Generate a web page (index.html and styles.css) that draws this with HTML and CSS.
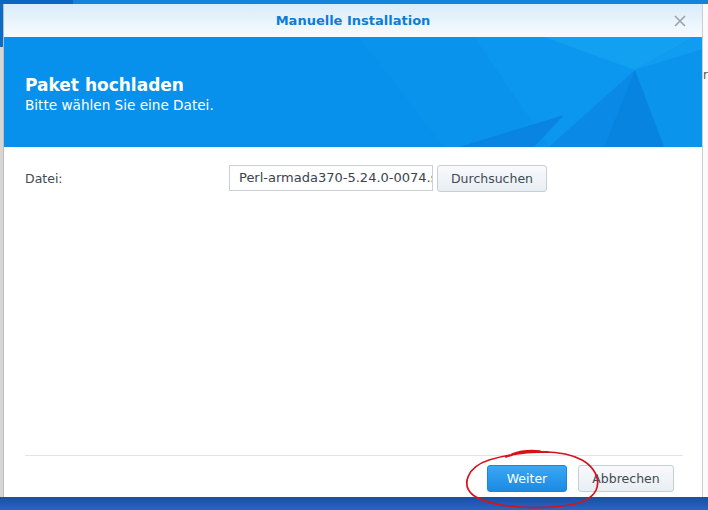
FILE: index.html
```html
<!DOCTYPE html>
<html lang="de">
    <head>
        <meta charset="UTF-8">
        <meta name="viewport" content="width=device-width,initial-scale=1.0">
        <title>Manuelle Installation</title>
        <link rel="stylesheet" href="styles.css">
    </head>
    <body>
        <div class="topbar"></div>
        <div class="desk">
            <div class="side-left"></div>
            <div class="dialog">
                <div class="dlg-head">
                    <span class="dlg-title">Manuelle Installation</span>
                    <span class="dlg-close">
                        <svg width="12" height="12" viewBox="0 0 12 12"><path d="M1 1 L11 11 M11 1 L1 11" stroke="#9aa3ab" stroke-width="1.6" fill="none"/></svg>
                    </span>
                </div>
                <div class="banner">
                    <svg class="banner-art" width="700" height="110" viewBox="0 0 700 110">
                        <polygon points="355,0 470,0 545,110 440,110" fill="#0a93ed"/>
                        <polygon points="470,0 600,0 631,33 545,110" fill="#0b97ef"/>
                        <polygon points="540,0 690,0 631,33" fill="#12a0f1"/>
                        <polygon points="545,110 631,33 600,110" fill="#0a8ae6"/>
                        <polygon points="455,110 560,78 530,110" fill="#0984e2"/>
                        <polygon points="631,33 700,12 700,110 660,110" fill="#0b94ec"/>
                        <polygon points="631,33 660,110 600,110" fill="#0783e0"/>
                        <polygon points="690,0 700,0 700,12 631,33" fill="#109cf0"/>
                    </svg>
                    <h1>Paket hochladen</h1>
                    <p>Bitte wählen Sie eine Datei.</p>
                </div>
                <div class="dlg-body">
                    <div class="field-row">
                        <label class="field-label">Datei:</label>
                        <div class="file-input">Perl-armada370-5.24.0-0074.spk</div>
                        <button class="btn">Durchsuchen</button>
                    </div>
                </div>
                <div class="dlg-foot">
                    <button class="btn primary">Weiter</button>
                    <button class="btn cancel">Abbrechen</button>
                </div>
            </div>
            <div class="side-right"><span>r</span></div>
        </div>
        <div class="taskbar"></div>
        <svg class="scribble" width="708" height="510" viewBox="0 0 708 510">
            <path d="M506 457 C524 450, 562 449, 582 460 C602 471, 606 497, 575 504 C545 510, 492 509, 473 495 C461 485, 467 467, 489 460 C505 455, 522 452, 548 452 M512 454 C520 451, 530 450, 540 451" stroke="#d8121c" stroke-width="1.7" fill="none" stroke-linecap="round"/>
        </svg>
    </body>
</html>
```

FILE: styles.css
```css
body {
    margin: 0;
    font-family: "DejaVu Sans", Verdana, sans-serif;
    font-size: 12.5px;
    color: #414b55;
    width: 708px;
    height: 510px;
    overflow: hidden;
    background: #f6f6f6;
}

.topbar {
    height: 4px;
    background: linear-gradient(to right, #0b68c0 73px, #1583d8 73px);
}

.desk {
    display: flex;
    height: 493px;
}

.side-left {
    width: 3px;
    background: linear-gradient(to bottom, #0c6cc4 43px, #d6d6d6 43px);
}

.side-right {
    width: 5px;
    background: #fbfbfb;
    border-top: 1px solid transparent;
    overflow: hidden;
}

.side-right span {
    display: block;
    margin-top: 63px;
    color: #555;
    font-size: 12px;
}

.dialog {
    width: 698px;
    border-left: 1px solid #b9bec3;
    border-right: 1px solid #c9ced2;
    background: white;
    display: flex;
    flex-direction: column;
}

.dlg-head {
    height: 33px;
    background: linear-gradient(to bottom, #d9ecfa, #f7fbfe);
    display: flex;
    align-items: center;
    justify-content: center;
    position: relative;
}

.dlg-title {
    font-weight: bold;
    font-size: 13px;
    color: #0b7dd6;
}

.dlg-close {
    position: absolute;
    right: 16px;
    top: 11px;
    line-height: 0;
}

.banner {
    height: 110px;
    background: #0891ec;
    position: relative;
    overflow: hidden;
    color: white;
    padding: 37px 0 0 21px;
    box-sizing: border-box;
}

.banner-art {
    position: absolute;
    left: 0;
    top: 0;
}

.banner h1 {
    position: relative;
    margin: 0;
    font-size: 17px;
    font-weight: bold;
    line-height: 22px;
}

.banner p {
    position: relative;
    margin: 0;
    font-size: 13.6px;
    line-height: 18px;
}

.dlg-body {
    flex: 1;
    padding: 18px 21px 0;
}

.field-row {
    display: flex;
    align-items: center;
    height: 26px;
}

.field-label {
    width: 204px;
    color: #414b55;
}

.file-input {
    width: 193px;
    height: 24px;
    line-height: 24px;
    padding: 0 0 0 9px;
    border: 1px solid #c9d0d6;
    white-space: nowrap;
    overflow: hidden;
    color: #3a444e;
    margin-right: 4px;
    font-size: 13px;
}

.btn {
    font-family: inherit;
    font-size: 12.5px;
    height: 27px;
    padding: 0;
    border: 1px solid #c6ced6;
    border-radius: 3px;
    background: linear-gradient(to bottom, #f8fafc, #e9eef3);
    color: #414b55;
    cursor: pointer;
}

.field-row .btn {
    width: 110px;
    height: 27px;
}

.dlg-foot {
    margin: 0 19px 0 21px;
    border-top: 1px solid #e2e4e6;
    height: 42px;
    display: flex;
    justify-content: flex-end;
    align-items: flex-start;
    padding: 9px 9px 0 0;
    box-sizing: border-box;
    gap: 11px;
}

.btn.primary {
    width: 80px;
    border-color: #1a86dc;
    background: linear-gradient(to bottom, #3aa8f5, #1b8ae2);
    color: white;
}

.btn.cancel {
    width: 96px;
}

.taskbar {
    height: 13px;
    background: linear-gradient(to bottom, #1a4ea6, #2a64c2);
}

.scribble {
    position: absolute;
    left: 0;
    top: 0;
    pointer-events: none;
}
```
